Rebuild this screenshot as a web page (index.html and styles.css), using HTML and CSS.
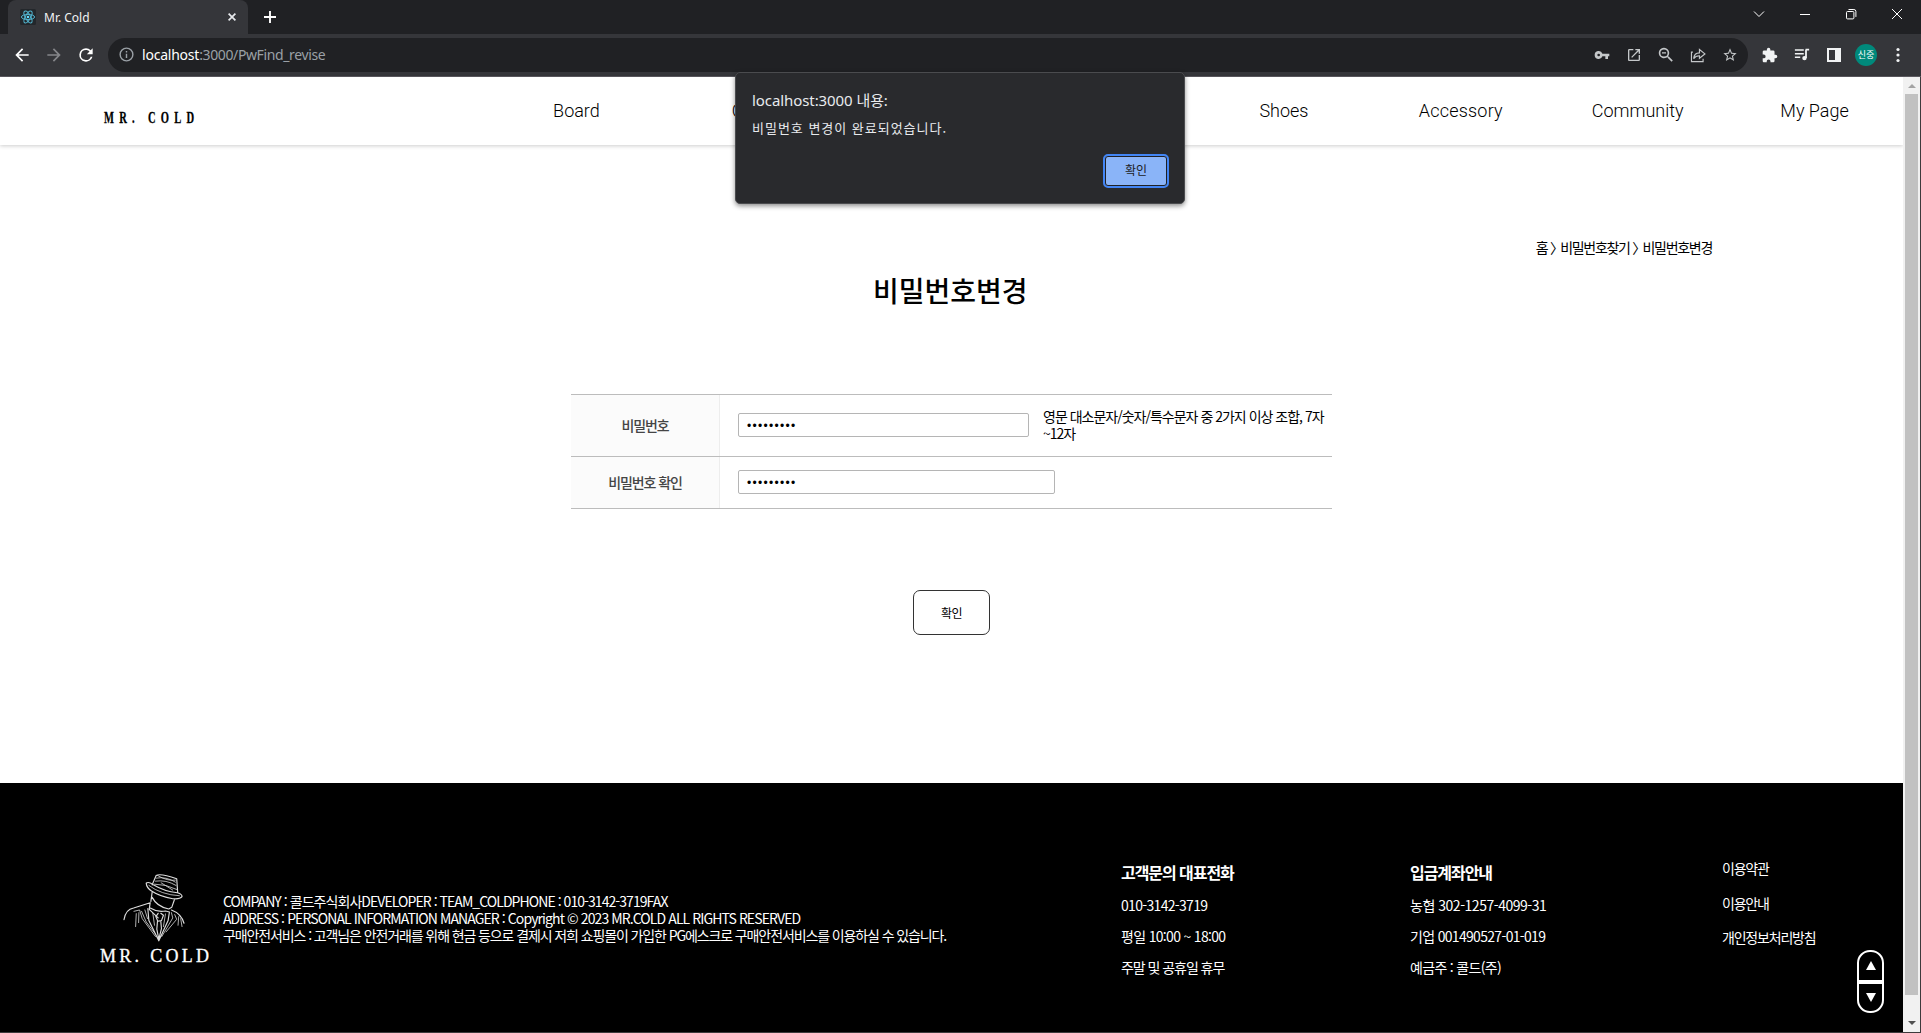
FILE: index.html
```html
<!DOCTYPE html>
<html lang="ko">
<head>
<meta charset="utf-8">
<title>Mr. Cold</title>
<link rel="stylesheet" href="styles.css">
</head>
<body>
<div class="tabstrip">
  <div class="tab">
    <svg class="favicon" viewBox="0 0 16 16"><rect width="16" height="16" rx="1.5" fill="#23272b"/><g fill="none" stroke="#52b4cf" stroke-width="1"><ellipse cx="8" cy="8" rx="6.6" ry="2.6"/><ellipse cx="8" cy="8" rx="6.6" ry="2.6" transform="rotate(60 8 8)"/><ellipse cx="8" cy="8" rx="6.6" ry="2.6" transform="rotate(120 8 8)"/></g><circle cx="8" cy="8" r="1.3" fill="#61dafb"/></svg>
    <span class="tab-title">Mr. Cold</span>
    <svg class="tab-close" viewBox="0 0 8 8"><path d="M.6.6l6.8 6.8M7.4.6L.6 7.4" stroke="#e8eaed" stroke-width="1.7"/></svg>
  </div>
  <svg class="new-tab" viewBox="0 0 12 12"><path d="M6 0v12M0 6h12" stroke="#fff" stroke-width="1.9"/></svg>
  <div class="window-buttons">
    <svg viewBox="0 0 12 12"><path d="M1 3.5l5 5 5-5" /></svg>
    <svg viewBox="0 0 12 12"><path d="M1 6.5h10"/></svg>
    <svg viewBox="0 0 12 12"><rect x="1.5" y="3.5" width="7.4" height="7.4" rx="1"/><path d="M3.5 1.5h5.4a2 2 0 0 1 2 2v5.4"/></svg>
    <svg viewBox="0 0 12 12"><path d="M1 1l10 10M11 1L1 11"/></svg>
  </div>
</div>
<div class="toolbar">
  <svg class="ico back" viewBox="0 0 24 24"><path fill="#fff" d="M20 11H7.83l5.59-5.59L12 4l-8 8 8 8 1.41-1.41L7.83 13H20v-2z"/></svg>
  <svg class="ico forward" viewBox="0 0 24 24"><path fill="#85868a" d="M12 4l-1.41 1.41L16.17 11H4v2h12.17l-5.58 5.59L12 20l8-8z"/></svg>
  <svg class="ico reload" viewBox="0 0 24 24"><path fill="#fff" d="M17.65 6.35A7.96 7.96 0 0 0 12 4a8 8 0 1 0 7.73 10h-2.08A6 6 0 1 1 12 6c1.66 0 3.14.69 4.22 1.78L13 11h7V4l-2.35 2.35z"/></svg>
  <div class="omnibox">
    <svg class="info" viewBox="0 0 24 24"><path fill="#9aa0a6" d="M11 7h2v2h-2zm0 4h2v6h-2zm1-9a10 10 0 1 0 0 20 10 10 0 0 0 0-20zm0 18a8 8 0 1 1 0-16 8 8 0 0 1 0 16z"/></svg>
    <div class="url"><b>localhost</b><span>:3000/PwFind_revise</span></div>
    <div class="omni-icons">
      <svg viewBox="0 0 24 24"><path d="M12.65 10A5.99 5.99 0 0 0 1 12a6 6 0 0 0 11.65 2H17v4h4v-4h2v-4H12.65zM7 14a2 2 0 1 1 0-4 2 2 0 0 1 0 4z"/></svg>
      <svg viewBox="0 0 24 24"><path d="M19 3H5a2 2 0 0 0-2 2v14c0 1.1.9 2 2 2h14a2 2 0 0 0 2-2v-7h-2v7H5V5h6V3h8zm-5 0v2h3.59l-9.83 9.83 1.41 1.41L19 6.41V10h2V3h-7z"/></svg>
      <svg viewBox="2 2 20 20"><path d="M15.5 14h-.79l-.28-.27a6.5 6.5 0 1 0-.7.7l.27.28v.79l5 4.99L20.49 19l-4.99-5zm-6 0a4.5 4.5 0 1 1 0-9 4.5 4.5 0 0 1 0 9zM7 8.6h5v1.6H7z"/></svg>
      <svg viewBox="1 1 22 22"><path fill="none" stroke="#c4c7c9" stroke-width="1.6" d="M5 8H3v13h16v-4M6 17c.5-5 3-8 8-8V4.500l7.500 6-7.500 6V13c-4 0-6 1-8 4z"/></svg>
      <svg viewBox="0 0 24 24"><path d="M22 9.24l-7.19-.62L12 2 9.19 8.63 2 9.24l5.46 4.73L5.82 21 12 17.27 18.18 21l-1.63-7.03L22 9.24zM12 15.4l-3.76 2.27 1-4.28-3.32-2.88 4.38-.38L12 6.1l1.71 4.04 4.38.38-3.32 2.88 1 4.28L12 15.4z"/></svg>
    </div>
  </div>
  <div class="ext-icons">
    <svg viewBox="1 0 23 23"><path d="M20.5 11H19V7a2 2 0 0 0-2-2h-4V3.500a2.500 2.500 0 0 0-5 0V5H4a2 2 0 0 0-2 2v3.800h1.500a2.700 2.700 0 0 1 0 5.400H2V20c0 1.100.9 2 2 2h3.800v-1.500a2.700 2.700 0 0 1 5.400 0V22H17a2 2 0 0 0 2-2v-4h1.500a2.500 2.500 0 0 0 0-5z"/></svg>
    <svg viewBox="0 0 18 16"><path d="M1 2.500h10M1 6.500h10M1 10.500h6" stroke="#f1f3f4" stroke-width="1.700"/><path d="M13 2h4M13.500 2v9.500" stroke="#f1f3f4" stroke-width="2"/><circle cx="11.800" cy="11.500" r="2.500"/></svg>
    <svg viewBox="0 0 16 16"><path fill-rule="evenodd" d="M1 1h14v14H1zM3 3v10h6V3z"/></svg>
    <span class="avatar">신중</span>
    <svg viewBox="0 0 16 16"><circle cx="8" cy="2.500" r="1.600"/><circle cx="8" cy="8" r="1.600"/><circle cx="8" cy="13.500" r="1.600"/></svg>
  </div>
</div>

<div class="viewport">
  <div class="page">
    <header class="site-header">
      <div class="brand"><span>MR. COLD</span></div>
      <nav class="menu">
        <a>Board</a><a>Outer</a><a></a><a></a><a>Shoes</a><a class="wide">Accessory</a><a>Community</a><a>My Page</a>
      </nav>
    </header>
    <main class="content">
      <div class="crumbs">홈 <i>〉</i>비밀번호찾기 <i>〉</i>비밀번호변경</div>
      <h1>비밀번호변경</h1>
      <div class="form">
        <div class="row first">
          <div class="label">비밀번호</div>
          <div class="field"><div class="input short">•••••••••</div><p>영문 대소문자/숫자/특수문자 중 2가지 이상 조합, 7자<br>~12자</p></div>
        </div>
        <div class="row second">
          <div class="label">비밀번호 확인</div>
          <div class="field"><div class="input">•••••••••</div></div>
        </div>
      </div>
      <button class="submit">확인</button>
    </main>
    <footer class="site-footer">
      <div class="foot-logo">
        <svg viewBox="100 20 190 210" fill="none" stroke="#dcdcdc" stroke-width="3.500" stroke-linecap="round" stroke-linejoin="round">
          <path d="M188 58L200 30Q212 22 262 40L265 82M170 53Q177 48 190 57Q225 78 264 82Q279 86 278 94Q272 102 250 100Q212 94 186 77Q171 67 170 53"/>
          <path stroke-width="2.400" d="M200 38Q230 32 258 50M198 47Q230 42 260 60M195 56Q230 56 262 72M178 60Q215 88 270 91M204 30Q235 48 258 44M215 52L250 74"/>
          <path d="M188 80L184 108M188 96Q202 124 238 131L247 126L255 103M103 163Q108 132 132 128L182 112L179 132L206 158M246 134Q276 145 284 174"/>
          <path d="M182 128Q205 142 228 137L240 140L236 166L208 227L178 166L175 130M206 144L199 154L205 168L216 166L222 150L214 144M204 168L202 192L208 222L216 190L214 168"/>
          <path stroke-width="2.400" d="M133 138L150 134L158 160L198 214M140 145L138 184M148 142L147 172M156 138L170 170L196 204M166 134L174 160M190 144L195 180M228 146L222 184M246 142L250 158L217 214M256 148L262 162L230 200M268 154L266 180M274 160L278 184"/>
        </svg>
        <div class="foot-name">MR. COLD</div>
      </div>
      <div class="company">
        <div>COMPANY : 콜드주식회사DEVELOPER : TEAM_COLDPHONE : 010-3142-3719FAX</div>
        <div class="address">ADDRESS : PERSONAL INFORMATION MANAGER : Copyright © 2023 MR.COLD ALL RIGHTS RESERVED</div>
        <div class="escrow">구매안전서비스 : 고객님은 안전거래를 위해 현금 등으로 결제시 저희 쇼핑몰이 가입한 PG에스크로 구매안전서비스를 이용하실 수 있습니다.</div>
      </div>
      <div class="foot-col phone">
        <h2>고객문의 대표전화</h2>
        <div>010-3142-3719</div>
        <div>평일 10:00 ~ 18:00</div>
        <div class="tight">주말 및 공휴일 휴무</div>
      </div>
      <div class="foot-col bank">
        <h2>입금계좌안내</h2>
        <div class="loose">농협 302-1257-4099-31</div>
        <div>기업 001490527-01-019</div>
        <div>예금주 : 콜드(주)</div>
      </div>
      <div class="foot-links">
        <div>이용약관</div>
        <div>이용안내</div>
        <div>개인정보처리방침</div>
      </div>
    </footer>
  </div>
  <div class="scrollbar"><i class="up"></i><i class="thumb"></i><i class="down"></i></div>
</div>

<div class="jump"><span><i class="tri-up"></i></span><span><i class="tri-down"></i></span></div>

<div class="dialog">
  <div class="dialog-title">localhost:3000 내용:</div>
  <div class="dialog-text">비밀번호 변경이 완료되었습니다.</div>
  <button class="dialog-ok">확인</button>
</div>
</body>
</html>
```
FILE: styles.css
```css
* { box-sizing: border-box; }
body { margin: 0; width: 1921px; height: 1033px; overflow: hidden; position: relative; background: #fff; font-family: "Noto Sans CJK KR", sans-serif; display: flex; flex-direction: column; }
svg { display: block; flex: none; }

.tabstrip { height: 34px; background: #202124; display: flex; align-items: flex-start; padding-left: 8px; flex: none; }
.tab { width: 240px; height: 34px; background: #35363a; border-radius: 8px 8px 0 0; display: flex; align-items: center; padding: 0 12px; }
.favicon { width: 16px; height: 16px; }
.tab-title { flex: 1; padding-left: 8px; font: 12px "Noto Sans", sans-serif; color: #f1f3f4; }
.tab-close { width: 8px; height: 8px; }
.new-tab { width: 12px; height: 12px; margin: 11px 0 0 16px; }
.window-buttons { margin-left: auto; display: flex; gap: 34px; padding: 8px 18px 0 0; }
.window-buttons svg { width: 12px; height: 12px; fill: none; stroke: #fff; stroke-width: 1; }

.toolbar { height: 43px; background: #35363a; border-bottom: 1px solid #5c5a60; display: flex; align-items: center; padding: 0 15px 1px 12px; flex: none; }
.ico { width: 20px; height: 20px; }
.forward { margin-left: 12px; }
.reload { margin-left: 12px; }
.omnibox { width: 1640px; height: 34px; border-radius: 17px; background: #202124; margin-left: 12px; display: flex; align-items: center; padding: 0 10px; flex: none; }
.info { width: 17px; height: 17px; }
.url { margin-left: 7px; flex: 1; display: flex; font: 14px "Noto Sans", sans-serif; color: #9aa0a6; letter-spacing: -.38px; }
.url b { font-weight: 400; color: #fff; letter-spacing: -.22px; }
.omni-icons { display: flex; gap: 16px; }
.omni-icons svg { width: 16px; height: 16px; fill: #c4c7c9; }
.ext-icons { display: flex; align-items: center; gap: 16px; margin-left: auto; }
.ext-icons svg { width: 16px; height: 16px; fill: #f1f3f4; }
.avatar { width: 22px; height: 22px; margin: 0 -3px; border-radius: 50%; background: #00897b; color: #fff; font-size: 9px; line-height: 21px; text-align: center; }

.viewport { display: flex; height: 956px; border-bottom: 1px solid #3c3a3c; border-right: 1px solid #3c3a3c; flex: none; }
.page { width: 1903px; display: flex; flex-direction: column; }
.scrollbar { width: 17px; background: #f1f1f1; display: flex; flex-direction: column; align-items: center; }
.scrollbar i { display: block; }
.up { border: 4px solid transparent; border-bottom-color: #a3a3a3; border-top: 0; margin: 7px 0 6px; }
.thumb { width: 13px; height: 901px; background: #c1c1c1; }
.down { border: 4px solid transparent; border-top-color: #505050; border-bottom: 0; margin-top: 26px; }

.site-header { height: 68px; display: flex; box-shadow: 0 1px 4px rgba(0,0,0,.2); flex: none; }
.brand { width: 488px; padding: 29px 0 0 104px; font: bold 17px/24px "Liberation Serif", serif; color: #000; }
.brand span { display: inline-block; white-space: nowrap; letter-spacing: 8.500px; transform: scaleX(.62); transform-origin: left; -webkit-text-stroke: .3px #000; }
.menu { flex: 1; display: grid; grid-template-columns: repeat(8, 1fr); }
.menu a { text-align: center; font: 300 18px/68px Roboto, sans-serif; color: #000; }
.menu .wide { letter-spacing: .2px; }

.content { height: 638px; display: flex; flex-direction: column; flex: none; }
.crumbs { align-self: flex-end; margin: 92px 191px 0 0; font-size: 14px; line-height: 20px; letter-spacing: -1.300px; white-space: nowrap; }
.crumbs i { font-style: normal; margin-right: -2.500px; }
h1 { margin: 13px 0 0 873px; font-size: 28px; line-height: 40px; font-weight: 500; }
.form { width: 761px; margin: 84px 0 0 571px; border-top: 1px solid #bcbcbc; }
.row { display: flex; border-bottom: 1px solid #bcbcbc; }
.first { height: 62px; }
.second { height: 52px; }
.label { width: 149px; flex: none; background: #fbfbfb; border-right: 1px solid #ededed; display: flex; align-items: center; justify-content: center; padding-bottom: 2px; font-size: 14px; letter-spacing: -1.100px; font-weight: 500; color: #454545; }
.field { display: flex; align-items: center; padding: 0 0 1px 18px; }
.input { width: 317px; height: 24px; border: 1px solid #b5b5b5; border-radius: 2px; padding-left: 8px; font: 12px/24px "Liberation Sans", sans-serif; letter-spacing: 1.300px; flex: none; }
.short { width: 291px; }
.field p { margin: 0 0 0 14px; font-size: 14px; line-height: 17px; letter-spacing: -1px; white-space: nowrap; }
.submit { width: 77px; height: 45px; margin: 81px 0 0 913px; border: 1px solid #333; border-radius: 7px; background: #fff; padding: 0; font: 12px "Noto Sans CJK KR", sans-serif; letter-spacing: -.5px; color: #000; }

.site-footer { flex: 1; background: #000; color: #fff; display: flex; font-size: 14px; line-height: 17px; white-space: nowrap; }
.foot-logo { width: 223px; flex: none; padding: 89px 0 0 100px; }
.foot-logo svg { width: 63px; height: 70px; margin-left: 23px; }
.foot-name { font: 18px/24px "Liberation Serif", serif; margin-top: 2px; letter-spacing: 3.300px; -webkit-text-stroke: .3px #fff; }
.company { width: 898px; flex: none; margin-top: 110px; letter-spacing: -.940px; }
.company .address { letter-spacing: -.900px; }
.company .escrow { letter-spacing: -1.110px; }
.foot-col { padding-top: 77px; line-height: 31px; letter-spacing: -.680px; }
.foot-col h2 { margin: 0 0 6px; font-size: 16px; line-height: 24px; font-weight: 700; letter-spacing: -1.050px; }
.foot-col .tight { letter-spacing: -1.050px; }
.foot-col .loose { letter-spacing: -.470px; }
.phone { width: 289px; }
.bank { width: 312px; }
.foot-links { padding-top: 68px; line-height: 34.500px; letter-spacing: -1.200px; }

.jump { position: absolute; left: 1857px; top: 950px; width: 27px; height: 63px; border: 2px solid #fff; border-radius: 13px; background: #000; display: flex; flex-direction: column; }
.jump span { flex: 1; display: flex; align-items: center; justify-content: center; }
.jump span:first-child { border-bottom: 4px solid #fff; }
.tri-up { border: 5px solid transparent; border-bottom: 9px solid #fff; border-top: 0; }
.tri-down { border: 5px solid transparent; border-top: 9px solid #fff; border-bottom: 0; }

.dialog { position: absolute; left: 735px; top: 72px; width: 450px; height: 132px; background: #292a2d; border: 1px solid #4a4b4e; border-radius: 5px; box-shadow: 0 2px 5px rgba(0,0,0,.45); padding: 15px 17px 0 16px; color: #e8eaed; display: flex; flex-direction: column; white-space: nowrap; }
.dialog-title { font: 15px/24px "Noto Sans", "Noto Sans CJK KR", sans-serif; letter-spacing: -.080px; }
.dialog-text { font-size: 13px; line-height: 20px; margin-top: 6px; letter-spacing: .980px; }
.dialog-ok { align-self: flex-end; margin-top: 18px; width: 62px; height: 30px; border: 0; border-radius: 3px; background: #8ab4f8; outline: 2px solid #4285f4; box-shadow: inset 0 0 0 1px #202124; font: 12px/28px "Noto Sans CJK KR", sans-serif; color: #202124; padding: 0 0 2px; }
```
